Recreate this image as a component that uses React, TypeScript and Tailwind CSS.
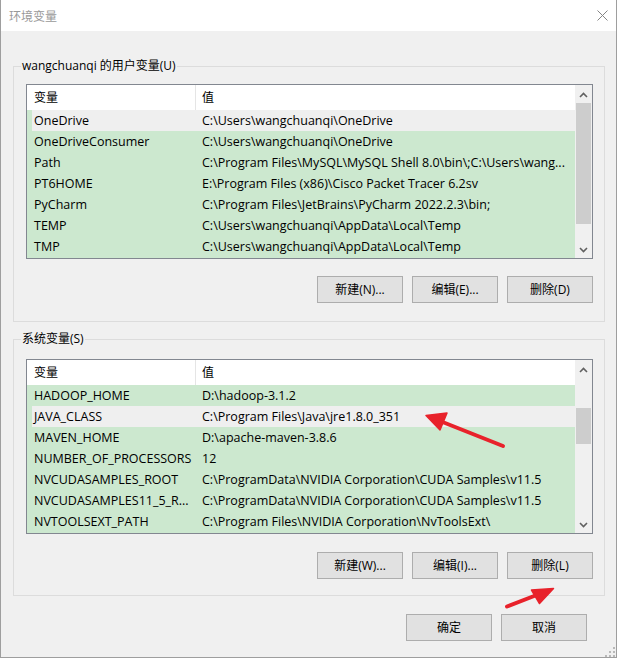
import React from 'react'

type Row = { name: string; value: string }

const USER_VARS: Row[] = [
  { name: 'OneDrive', value: 'C:\\Users\\wangchuanqi\\OneDrive' },
  { name: 'OneDriveConsumer', value: 'C:\\Users\\wangchuanqi\\OneDrive' },
  { name: 'Path', value: 'C:\\Program Files\\MySQL\\MySQL Shell 8.0\\bin\\;C:\\Users\\wang...' },
  { name: 'PT6HOME', value: 'E:\\Program Files (x86)\\Cisco Packet Tracer 6.2sv' },
  { name: 'PyCharm', value: 'C:\\Program Files\\JetBrains\\PyCharm 2022.2.3\\bin;' },
  { name: 'TEMP', value: 'C:\\Users\\wangchuanqi\\AppData\\Local\\Temp' },
  { name: 'TMP', value: 'C:\\Users\\wangchuanqi\\AppData\\Local\\Temp' },
]

const SYSTEM_VARS: Row[] = [
  { name: 'HADOOP_HOME', value: 'D:\\hadoop-3.1.2' },
  { name: 'JAVA_CLASS', value: 'C:\\Program Files\\Java\\jre1.8.0_351' },
  { name: 'MAVEN_HOME', value: 'D:\\apache-maven-3.8.6' },
  { name: 'NUMBER_OF_PROCESSORS', value: '12' },
  { name: 'NVCUDASAMPLES_ROOT', value: 'C:\\ProgramData\\NVIDIA Corporation\\CUDA Samples\\v11.5' },
  { name: 'NVCUDASAMPLES11_5_R...', value: 'C:\\ProgramData\\NVIDIA Corporation\\CUDA Samples\\v11.5' },
  { name: 'NVTOOLSEXT_PATH', value: 'C:\\Program Files\\NVIDIA Corporation\\NvToolsExt\\' },
]

function Chevron({ up }: { up?: boolean }) {
  return (
    <svg width="9" height="6" viewBox="0 0 9 6">
      <path
        d={up ? 'M1 5 L4.5 1.5 L8 5' : 'M1 1 L4.5 4.5 L8 1'}
        fill="none"
        stroke="#606060"
        strokeWidth="1.6"
      />
    </svg>
  )
}

function Scrollbar({ thumbClass }: { thumbClass: string }) {
  return (
    <div className="w-[17px] bg-[#f0f0f0] flex flex-col">
      <div className="h-[17px] flex items-center justify-center pt-[2px]">
        <Chevron up />
      </div>
      <div className="flex-1 px-[1px]">
        <div className={`bg-[#cdcdcd] ${thumbClass}`} />
      </div>
      <div className="h-[17px] flex items-center justify-center pt-[1px]">
        <Chevron />
      </div>
    </div>
  )
}

function VarList({ rows, selected, thumbClass }: { rows: Row[]; selected: number; thumbClass: string }) {
  return (
    <div className="w-[567px] h-[175px] border border-[#828790] bg-white flex">
      <div className="w-[548px] flex flex-col">
        {/* header */}
        <div className="h-[25px] shrink-0 flex bg-white text-[12px] leading-[25px]">
          <div className="w-[168px] pl-[7px]">变量</div>
          <div className="w-px bg-[#e5e5e5]" />
          <div className="pl-[6px]">值</div>
        </div>
        <div className="flex-1 bg-[#cce8cf]">
          {rows.map((r, i) => (
            <div
              key={r.name}
              className={[
                'ml-[5px] h-[21px] flex text-[12.5px] leading-[21px] whitespace-nowrap',
                i === selected ? 'bg-[#efefef]' : '',
              ].join(' ')}
            >
              <div className="w-[163px] pl-[2px] overflow-hidden">{r.name}</div>
              <div className="flex-1 min-w-0 pl-[7px] overflow-hidden">{r.value}</div>
            </div>
          ))}
        </div>
      </div>
      <Scrollbar thumbClass={thumbClass} />
    </div>
  )
}

function Btn({ children }: { children: React.ReactNode }) {
  return (
    <button className="w-[86px] h-[27px] border border-[#adadad] bg-[#e1e1e1] text-[12px] leading-none flex items-center justify-center text-black">
      {children}
    </button>
  )
}

function GroupBox({ label, className, children }: { label: string; className: string; children: React.ReactNode }) {
  return (
    <div className={`relative w-[592px] border border-[#dcdcdc] pl-[12px] ${className}`}>
      <span className="absolute left-[7px] top-[-9px] px-[1px] bg-[#f0f0f0] text-[12px] leading-[16px] whitespace-nowrap">
        {label}
      </span>
      {children}
    </div>
  )
}

export default function App() {
  return (
    <div className="relative w-[618px] h-[659px] overflow-hidden bg-white text-black font-['Open_Sans','Noto_Sans_CJK_SC',sans-serif]">
      <div className="relative w-[617px] h-[658px] flex flex-col border-x border-b border-[#9e9e9e] bg-[#f0f0f0]">
        {/* Title bar */}
        <div className="h-[31px] shrink-0 bg-white flex items-center justify-between pl-[8px] pr-[8px]">
          <span className="text-[12px] text-[#999999] font-['Noto_Sans_CJK_SC',sans-serif]">环境变量</span>
          <svg width="11" height="11" viewBox="0 0 11 11">
            <path d="M0.5 0.5 L10.5 10.5 M10.5 0.5 L0.5 10.5" stroke="#858585" strokeWidth="1" />
          </svg>
        </div>

        {/* Body */}
        <div className="flex-1 flex flex-col pt-[35px] pl-[12px]">
          <GroupBox label="wangchuanqi 的用户变量(U)" className="pt-[17px] pb-[18px]">
            <VarList rows={USER_VARS} selected={0} thumbClass="mt-[1px] h-[121px]" />
            <div className="w-[567px] flex justify-end gap-[9px] mt-[17px]">
              <Btn>新建(N)...</Btn>
              <Btn>编辑(E)...</Btn>
              <Btn>删除(D)</Btn>
            </div>
          </GroupBox>

          <GroupBox label="系统变量(S)" className="mt-[17px] pt-[19px] pb-[16px]">
            <VarList rows={SYSTEM_VARS} selected={1} thumbClass="mt-[31px] h-[36px]" />
            <div className="w-[567px] flex justify-end gap-[9px] mt-[18px]">
              <Btn>新建(W)...</Btn>
              <Btn>编辑(I)...</Btn>
              <Btn>删除(L)</Btn>
            </div>
          </GroupBox>

          <div className="flex justify-end gap-[9px] mt-[18px] pr-[29px]">
            <Btn>确定</Btn>
            <Btn>取消</Btn>
          </div>
        </div>

        {/* Resize grip */}
        <svg className="absolute right-0 bottom-0" width="11" height="10" viewBox="0 0 11 10">
          <g fill="#b8b8b8">
            <rect x="8" y="0" width="2" height="2" />
            <rect x="4" y="4" width="2" height="2" />
            <rect x="8" y="4" width="2" height="2" />
            <rect x="0" y="8" width="2" height="2" />
            <rect x="4" y="8" width="2" height="2" />
            <rect x="8" y="8" width="2" height="2" />
          </g>
        </svg>
      </div>

      {/* Red annotation arrows */}
      <svg className="absolute inset-0 pointer-events-none" width="618" height="659" viewBox="0 0 618 659">
        <g fill="#e8222b" stroke="#e8222b" strokeLinecap="round" strokeLinejoin="round">
          <line x1="503" y1="446" x2="440" y2="421" strokeWidth="4" />
          <polygon points="426,415.5 447,413 440,430" strokeWidth="1.5" />
          <line x1="507" y1="606.5" x2="538" y2="594.5" strokeWidth="4" />
          <polygon points="553.5,588.5 531.5,590 539.5,603.5" strokeWidth="1.5" />
        </g>
      </svg>
    </div>
  )
}
